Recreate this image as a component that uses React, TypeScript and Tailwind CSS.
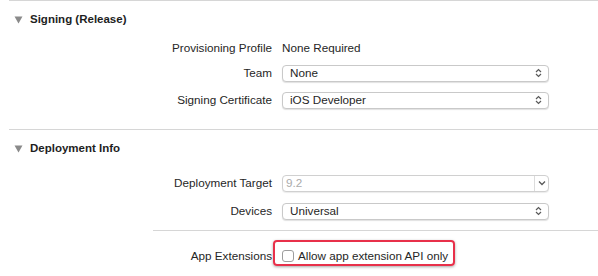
import React from "react";

const font = { fontFamily: '"Liberation Sans", Arial, sans-serif' };

function UpDown() {
  return (
    <svg width="7" height="10" viewBox="0 0 7 10" className="shrink-0">
      <path d="M1 4 L3.5 1.5 L6 4" fill="none" stroke="#5a5a5a" strokeWidth="1.2" />
      <path d="M1 6 L3.5 8.5 L6 6" fill="none" stroke="#5a5a5a" strokeWidth="1.2" />
    </svg>
  );
}

function Down() {
  return (
    <svg width="8" height="6" viewBox="0 0 8 6">
      <path d="M1 1.5 L4 4.5 L7 1.5" fill="none" stroke="#5a5a5a" strokeWidth="1.3" />
    </svg>
  );
}

function Tri() {
  return (
    <svg width="9" height="8" viewBox="0 0 9 8" className="shrink-0">
      <path d="M0.5 0.5 H8.5 L4.5 7.5 Z" fill="#8a8a8a" />
    </svg>
  );
}

function Popup({ value }: { value: string }) {
  return (
    <div className="flex h-[17px] w-[267px] items-center justify-between rounded-[4px] border border-[#c9c9c9] bg-white pl-[7px] pr-[6px] shadow-[0_1px_1px_rgba(0,0,0,0.12)]">
      <span className="text-[11.7px] text-[#262626]">{value}</span>
      <UpDown />
    </div>
  );
}

function Row({ label, children, h = 18 }: { label: string; children: React.ReactNode; h?: number }) {
  return (
    <div className="flex items-center" style={{ height: h }}>
      <div className="w-[272px] whitespace-nowrap text-right text-[11.7px] text-[#262626]">{label}</div>
      <div className="ml-[10px] flex items-center">{children}</div>
    </div>
  );
}

function Header({ title }: { title: string }) {
  return (
    <div className="flex h-[38px] items-center pl-[14px]">
      <Tri />
      <span className="ml-[7px] text-[11.5px] font-bold text-[#1e1e1e]">{title}</span>
    </div>
  );
}

export default function App() {
  return (
    <div className="relative h-[276px] w-[598px] overflow-hidden bg-white" style={font}>
      <div className="ml-[9px] h-px bg-[#d6d6d6]" />
      <Header title="Signing (Release)" />
      <Row label="Provisioning Profile">
        <span className="text-[11.7px] text-[#262626]">None Required</span>
      </Row>
      <div className="h-[7px]" />
      <Row label="Team">
        <Popup value="None" />
      </Row>
      <div className="h-[9px]" />
      <Row label="Signing Certificate">
        <Popup value="iOS Developer" />
      </Row>
      <div className="h-[20px]" />
      <div className="ml-[9px] h-px bg-[#d6d6d6]" />
      <Header title="Deployment Info" />
      <div className="h-[6px]" />
      <Row label="Deployment Target">
        <div className="flex h-[17px] w-[267px] items-stretch rounded-[4px] border border-[#d0d0d0] bg-white shadow-[0_1px_1px_rgba(0,0,0,0.08)]">
          <div className="flex flex-1 items-center pl-[3px] text-[11.7px] text-[#ababab]">9.2</div>
          <div className="flex w-[14px] items-center justify-center border-l border-[#dcdcdc]">
            <Down />
          </div>
        </div>
      </Row>
      <div className="h-[10px]" />
      <Row label="Devices">
        <Popup value="Universal" />
      </Row>
      <div className="h-[10px]" />
      <div className="ml-[153px] h-px bg-[#d6d6d6]" />
      <div className="h-[16px]" />
      <Row label="App Extensions">
        <div className="relative flex items-center">
          <div className="h-[12px] w-[12px] rounded-[3px] border border-[#9d9d9d] bg-white" />
          <span className="ml-[4px] whitespace-nowrap text-[11.7px] text-[#262626]">Allow app extension API only</span>
          <div className="absolute left-[-9px] top-[-7px] h-[26px] w-[182px] rounded-[4px] border-2 border-[#e8304a] shadow-[0_1px_3px_rgba(0,0,0,0.35)]" />
        </div>
      </Row>
    </div>
  );
}
